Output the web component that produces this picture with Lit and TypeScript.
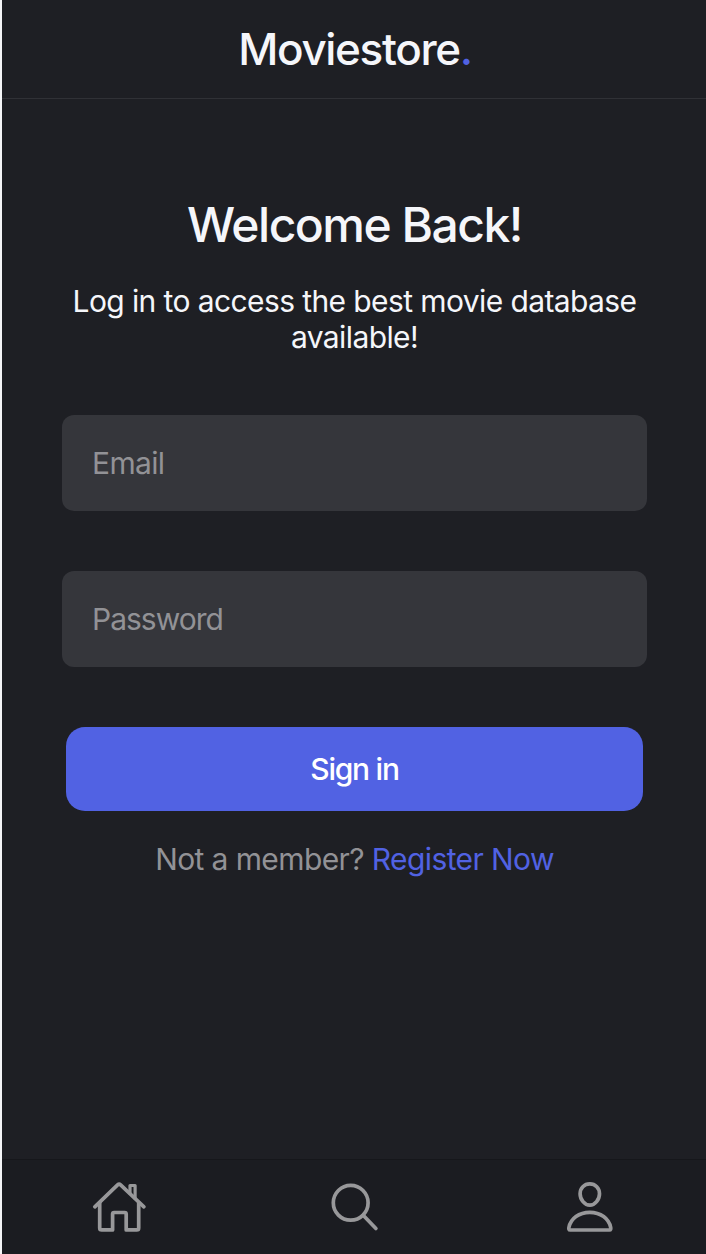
import { LitElement, html, css } from "lit";
import { customElement } from "lit/decorators.js";

@customElement("app-root")
export class AppRoot extends LitElement {
  static styles = css`
    :host {
      display: flex;
      flex-direction: column;
      box-sizing: border-box;
      height: 1254px;
      border-left: 2px solid #f4f5f7;
      background: #1e1f24;
      color: #f5f6fa;
      font-family: Inter, "Noto Sans", sans-serif;
      font-size: 30px;
      line-height: 36px;
      letter-spacing: -0.6px;
    }
    .header {
      height: 98px;
      flex: none;
      display: flex;
      align-items: center;
      justify-content: center;
      border-bottom: 1px solid #303136;
      font-size: 44px;
      font-weight: 500;
      letter-spacing: -1.33px;
      line-height: 54px;
    }
    .brand { padding-left: 2px; }
    .dot { color: #5162e3; }
    .main {
      flex: 1;
      display: flex;
      flex-direction: column;
      padding: 97px 59px 0 60px;
      text-align: center;
    }
    .title {
      margin: 0 0 29px;
      font-size: 48px;
      line-height: 58px;
      font-weight: 500;
      letter-spacing: -1.5px;
    }
    .lead {
      margin: 0 0 60px;
    }
    .field {
      box-sizing: border-box;
      width: 100%;
      height: 96px;
      margin: 0 0 60px;
      padding: 0 30px;
      border: 0;
      border-radius: 12px;
      background: #35363b;
      color: #f5f6fa;
      font: inherit;
      letter-spacing: -0.65px;
      outline: none;
    }
    .secret { letter-spacing: -1px; }
    .field::placeholder { color: #929296; opacity: 1; }
    .submit {
      height: 84px;
      margin: 0 4px;
      padding: 0;
      border: 0;
      border-radius: 19px;
      background: #5162e3;
      color: #fff;
      font: inherit;
      font-weight: 500;
      letter-spacing: -1.25px;
    }
    .register {
      margin: 30px 0 0;
      color: #929296;
    }
    .link { color: #5162e3; text-decoration: none; }
    .nav {
      height: 94px;
      flex: none;
      display: grid;
      grid-template-columns: repeat(3, 1fr);
      place-items: center;
      border-top: 1px solid #16171b;
      background: #1b1c21;
    }
    .icon {
      display: block;
      width: 60px;
      height: 60px;
      fill: none;
      stroke: #98989a;
      stroke-width: 3.7;
      stroke-linecap: round;
      stroke-linejoin: round;
    }
  `;

  render() {
    return html`
      <header class="header"><span class="brand">Moviestore<span class="dot">.</span></span></header>
      <main class="main">
        <h1 class="title">Welcome Back!</h1>
        <p class="lead">Log in to access the best movie database available!</p>
        <input class="field" type="email" placeholder="Email" />
        <input class="field secret" type="password" placeholder="Password" />
        <button class="submit">Sign in</button>
        <p class="register">Not a member? <a class="link" href="#">Register Now</a></p>
      </main>
      <nav class="nav">
        <svg class="icon" viewBox="0 0.5 60 60">
          <path d="M5.8 30.3 L28.6 8.400 Q30.100 7 31.600 8.400 L54.900 30.300" />
          <path d="M10.700 26 V51.400 Q10.700 53.400 12.700 53.400 H23.600 V37.500 Q23.600 36 25.100 36 H35.700 Q37.200 36 37.200 37.500 V53.400 H47.700 Q49.700 53.400 49.700 51.400 V26" />
          <path d="M41 17 V9 H46.100 V22" stroke-width="3.200" />
        </svg>
        <svg class="icon" viewBox="0 0.5 60 60">
          <circle cx="26.700" cy="26.300" r="17.400" />
          <path d="M39.200 38.800 L51.900 52" />
        </svg>
        <svg class="icon" viewBox="0 0.5 60 60">
          <path d="M30.800 7.400 C36.400 7.400 40.500 11.600 40.500 17.200 C40.500 23 36 28.600 30.800 28.600 C25.600 28.600 21.100 23 21.100 17.200 C21.100 11.600 25.200 7.400 30.800 7.400 Z" />
          <path d="M11.200 53.500 C9.800 53.500 9.700 52.500 9.900 51 C11.700 42 20 35.800 30.800 35.800 C41.600 35.800 49.900 42 51.700 51 C51.900 52.500 51.800 53.500 50.400 53.500 Z" />
        </svg>
      </nav>
    `;
  }
}
